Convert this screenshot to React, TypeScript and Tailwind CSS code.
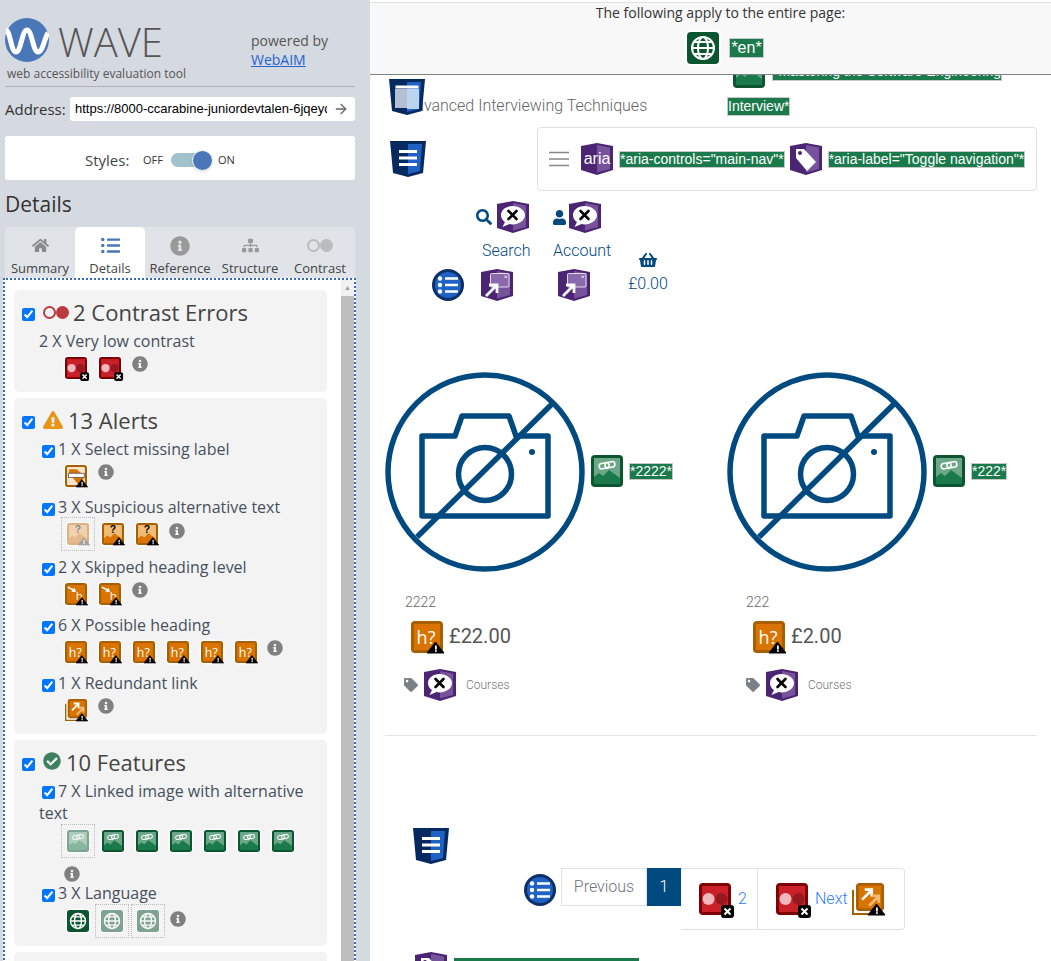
import React from 'react';
import { FaHome, FaListUl, FaInfoCircle, FaSitemap, FaSearch, FaUser, FaShoppingBasket, FaTag, FaCheckCircle, FaExclamationTriangle } from 'react-icons/fa';
import { ArrowRight } from 'lucide-react';

// --- WAVE icons, all drawn on a 32x32 box ---
const Badge: React.FC<{ muted?: boolean }> = ({ muted }) => (
    <g>
        <path d="M24.5 21 L33 32 H16 Z" fill={muted ? '#888' : '#000'} stroke={muted ? '#888' : '#000'} strokeWidth="1" strokeLinejoin="round" />
        <rect x="24" y="24.5" width="1.8" height="4" fill="#fff" />
        <rect x="24" y="29.2" width="1.8" height="1.6" fill="#fff" />
    </g>
);

const Square: React.FC<{ outer: string; inner: string; children?: React.ReactNode }> = ({ outer, inner, children }) => (
    <g>
        <rect x="-2" y="-2" width="36" height="36" rx="6" fill="#fff" />
        <rect x="0" y="0" width="32" height="32" rx="4" fill={outer} />
        <rect x="3" y="3" width="26" height="26" fill={inner} />
        {children}
    </g>
);

const Globe = () => (
    <g fill="none" stroke="#fff" strokeWidth="2">
        <circle cx="16" cy="16" r="11" />
        <ellipse cx="16" cy="16" rx="5" ry="11" />
        <path d="M5 16H27M7 10H25M7 22H25" />
    </g>
);

const Mountain: React.FC<{ fill: string }> = ({ fill }) => <path d="M3 29V22L8 18L12 21L18 15L29 23V29Z" fill={fill} />;

const LinkGlyph = () => (
    <g fill="none" stroke="#fff" strokeWidth="1.5">
        <rect x="8" y="8" width="10" height="5.5" rx="2.7" transform="rotate(-10 13 10)" />
        <rect x="14" y="7" width="10" height="5.5" rx="2.7" transform="rotate(-10 19 10)" />
    </g>
);

const PurpleShield: React.FC<{ children?: React.ReactNode }> = ({ children }) => (
    <g>
        <path d="M0 3L16 0L32 3V27L16 32L0 27Z" fill="#4b2473" />
        <path d="M16 2L29 4.5V26L16 29.5Z" fill="#76539b" />
        {children}
    </g>
);

const Bubble = () => (
    <g>
        <path d="M15.5 5C9 5 4 9 4 14C4 17 5.5 19.5 8 21L5.5 26L12.5 23C13.5 23.2 14.5 23.4 15.5 23.4C22 23.4 28 19.5 28 14C28 9 22 5 15.5 5Z" fill="#fff" />
        <path d="M11.5 10L19.5 18M19.5 10L11.5 18" stroke="#000" strokeWidth="2.6" strokeLinecap="round" />
    </g>
);

const Expand = () => (
    <g>
        <rect x="9.5" y="4.5" width="18.5" height="13.5" rx="1" fill="#8a6aaa" stroke="#fff" strokeWidth="0.8" />
        <path d="M5 27L15 17M8 16H16V24" fill="none" stroke="#fff" strokeWidth="2.8" />
        <path d="M23.5 6.5L26 9M26 6.5L23.5 9" stroke="#fff" strokeWidth="0.8" />
    </g>
);

const orange = '#a95e00';
const orangeIn = '#d97400';
const glyphs: Record<string, React.ReactNode> = {
    contrast: (
        <g>
            <Square outer="#7f0000" inner="#c9202a">
                <circle cx="9.5" cy="16" r="6" fill="#f0b8bc" />
                <circle cx="22.5" cy="16" r="6" fill="#961820" />
            </Square>
            <rect x="22" y="22" width="13" height="13" rx="3" fill="#000" />
            <path d="M25.5 25.5L31.5 31.5M31.5 25.5L25.5 31.5" stroke="#fff" strokeWidth="2" />
        </g>
    ),
    select: (
        <g>
            <rect x="-2" y="-2" width="36" height="36" rx="6" fill="#fff" />
            <rect x="1.5" y="1.5" width="29" height="29" rx="3" fill="#f8e6cc" stroke={orange} strokeWidth="3" />
            <path d="M6 6H17L29 17L19 28L6 12Z" fill={orangeIn} />
            <rect x="5" y="12" width="23" height="6" fill="#fff" stroke="#555" strokeWidth="1.2" />
            <Badge />
        </g>
    ),
    alt: (
        <g>
            <Square outer={orange} inner="#f0bc78">
                <Mountain fill={orangeIn} />
                <text x="16" y="15" fontSize="15" fontWeight="700" fontFamily="Liberation Sans, sans-serif" textAnchor="middle" fill="#000">?</text>
            </Square>
            <Badge />
        </g>
    ),
    altMuted: (
        <g opacity="0.75">
            <Square outer="#d99c5c" inner="#f0c898">
                <Mountain fill="#e0a868" />
                <text x="16" y="15" fontSize="15" fontWeight="700" fontFamily="Liberation Sans, sans-serif" textAnchor="middle" fill="#666">?</text>
            </Square>
            <Badge muted />
        </g>
    ),
    skipped: (
        <g>
            <Square outer={orange} inner={orangeIn}>
                <path d="M4 6L14 11" stroke="#fff" strokeWidth="2.4" />
                <path d="M16 13L9 13L14 7Z" fill="#fff" />
                <text x="21" y="24" fontSize="17" fontFamily="Open Sans, sans-serif" textAnchor="middle" fill="#fff">h</text>
            </Square>
            <Badge />
        </g>
    ),
    possible: (
        <g>
            <Square outer={orange} inner={orangeIn}>
                <text x="15" y="23" fontSize="18" fontFamily="Open Sans, sans-serif" textAnchor="middle" fill="#fff">h?</text>
            </Square>
            <Badge />
        </g>
    ),
    redundant: (
        <g>
            <path d="M1 7V31H27" fill="none" stroke="#fff" strokeWidth="4" />
            <path d="M1 7V31H27" fill="none" stroke={orange} strokeWidth="2" />
            <g transform="translate(4 0) scale(0.875)">
                <rect x="0" y="0" width="32" height="32" rx="4" fill={orange} />
                <rect x="3" y="3" width="26" height="26" fill={orangeIn} />
                <path d="M7 19L17 9M10 7.5H18V15.5" fill="none" stroke="#fff" strokeWidth="3" />
                <path d="M15 26L25 16M18 14.5H26V22.5" fill="none" stroke="#f0bc78" strokeWidth="3" />
            </g>
            <Badge />
        </g>
    ),
    linked: (
        <Square outer="#0b5530" inner="#6ca888">
            <Mountain fill="#1b7a4c" />
            <LinkGlyph />
        </Square>
    ),
    linkedMuted: (
        <g opacity="0.5">
            <Square outer="#0b5530" inner="#6ca888">
                <Mountain fill="#1b7a4c" />
                <LinkGlyph />
            </Square>
        </g>
    ),
    lang: (
        <Square outer="#0b5530" inner="#0b5530">
            <Globe />
        </Square>
    ),
    langMuted: (
        <g opacity="0.5">
            <Square outer="#0b5530" inner="#0b5530">
                <Globe />
            </Square>
        </g>
    ),
    list: (
        <g>
            <circle cx="16" cy="16" r="16" fill="#0b2f66" />
            <circle cx="16" cy="16" r="13" fill="#1f62c4" />
            <path d="M13 9.5H26M13 16H26M13 22.5H26" stroke="#fff" strokeWidth="2.4" />
            <circle cx="8" cy="9.5" r="2.2" fill="#fff" />
            <circle cx="8" cy="16" r="2.2" fill="#fff" />
            <circle cx="8" cy="22.5" r="2.2" fill="#fff" />
        </g>
    ),
    noalt: (
        <PurpleShield>
            <Bubble />
        </PurpleShield>
    ),
    expand: (
        <PurpleShield>
            <Expand />
        </PurpleShield>
    ),
    aria: (
        <PurpleShield>
            <text x="16" y="21" fontSize="16" fontFamily="Liberation Sans, sans-serif" textAnchor="middle" fill="#fff">aria</text>
        </PurpleShield>
    ),
    tag: (
        <PurpleShield>
            <path d="M6 6H14L26 19L17 28L6 15Z" fill="#fff" />
            <circle cx="10" cy="10" r="2" fill="#4b2473" />
        </PurpleShield>
    ),
};

const Ico: React.FC<{ kind: string; size?: number; className?: string }> = ({ kind, size = 32, className }) => (
    <svg width={size} height={size} viewBox="0 0 32 32" className={`shrink-0 overflow-visible font-normal ${className || ''}`}>
        {glyphs[kind]}
    </svg>
);

// the CSS/HTML shield icons on the page
const Shield: React.FC<{ dim?: boolean; className?: string }> = ({ dim, className }) => (
    <svg width="36" height="36" viewBox="0 0 36 36" className={`shrink-0 ${className || ''}`}>
        <path d="M0 0H36L33 32L18 36L3 32Z" fill="#062a5f" />
        <path d="M18 3H32L30 30L18 33Z" fill="#1f62c4" />
        {dim ? (
            <g>
                <rect x="6" y="10" width="12" height="19" fill="#b3c0d4" />
                <rect x="18" y="10" width="12" height="20" fill="#bcd4f0" />
                <rect x="6.5" y="6.5" width="23" height="3" fill="#fff" />
            </g>
        ) : (
            <path d="M9 10.5H27M9 17H27M9 23.5H27" stroke="#fff" strokeWidth="3" />
        )}
    </svg>
);

const Label: React.FC<{ children: React.ReactNode; className?: string }> = ({ children, className }) => (
    <span className={`bg-[#1a7a4c] border border-[#c8c8c8] text-white leading-[15px] whitespace-nowrap font-normal font-['Liberation_Sans',sans-serif] ${className || 'text-[14px]'}`}>{children}</span>
);

const NoCamera = () => (
    <svg width="200" height="200" viewBox="0 0 200 200" className="shrink-0" fill="none" stroke="#004a80" strokeWidth="5.5">
        <circle cx="100" cy="100" r="97" />
        <path d="M37 64H70L77 44H124L131 64H163V144H37Z" strokeLinejoin="round" />
        <circle cx="100" cy="102" r="26.5" />
        <circle cx="147" cy="80" r="3" fill="#004a80" stroke="none" />
        <path d="M168 31L32 165" />
    </svg>
);

// --- Sidebar bits ---
const Check: React.FC<{ className?: string }> = ({ className }) => (
    <input type="checkbox" defaultChecked readOnly className={`w-[13px] h-[13px] m-0 shrink-0 ${className || ''}`} />
);

const Info: React.FC<{ className?: string }> = ({ className }) => <FaInfoCircle className={`text-[#808080] text-[16px] shrink-0 ${className || ''}`} />;

const Ghost: React.FC<{ kind: string }> = ({ kind }) => (
    <span className="w-[34px] h-[34px] border border-dotted border-[#bbb] flex items-center justify-center shrink-0">
        <Ico kind={kind} size={22} />
    </span>
);

const Item: React.FC<{ text: string; className?: string; children: React.ReactNode }> = ({ text, className, children }) => (
    <div className={className}>
        <div className="pl-[28px] -mb-px leading-[22px]">
            <span className="inline-flex items-baseline">
                <Check className="translate-y-[3px]" />
                <span className="ml-[3px]">{text}</span>
            </span>
        </div>
        {children}
    </div>
);

const Heading: React.FC<{ icon: React.ReactNode; text: string }> = ({ icon, text }) => (
    <div className="flex items-center pl-[8px] h-[24px]">
        <Check className="translate-y-[2px]" />
        {icon}
        <span className="text-[22px] text-[#444] leading-[24px]">{text}</span>
    </div>
);

const Sidebar = () => (
    <aside className="w-[370px] h-[961px] shrink-0 overflow-hidden bg-[#d5d9e0] pt-[2px] pl-[5px] pr-[15px] font-['Open_Sans',sans-serif] text-[#3f4650]">
        <div className="h-[85px] border-b border-[#aeb2b6] relative flex">
            <div className="w-[246px]">
                <div className="flex items-center pt-[16px] h-[60px]">
                    <svg width="44" height="44" viewBox="0 0 44 44" className="shrink-0">
                        <circle cx="22" cy="22" r="22" fill="#4a77b8" />
                        <path d="M1 12C5 12 6 34 11 34C16 34 17 12 22 12C27 12 28 34 33 34C38 34 40 18 43 15" fill="none" stroke="#fff" strokeWidth="5" />
                    </svg>
                    <span className="ml-[9px] mt-[3px] text-[40px] leading-[40px] font-light text-[#555]">WAVE</span>
                </div>
                <div className="pl-[2px] text-[12px] leading-[16px] mt-[4px] text-[#555]">web accessibility evaluation tool</div>
            </div>
            <div className="pt-[29px] text-[14px] leading-[19px] text-[#555]">
                <div>powered by</div>
                <div className="text-[#2563d0] underline">WebAIM</div>
            </div>
        </div>
        <div className="flex items-center mt-[10px] h-[24px]">
            <span className="text-[15px] w-[65px] text-[#333]">Address:</span>
            <div className="w-[285px] h-[24px] bg-white rounded-[3px] flex items-center pl-[5px] font-['Liberation_Sans',sans-serif] text-[13px] text-black">
                <span className="w-[252px] shrink-0 overflow-hidden whitespace-nowrap">https://8000-ccarabine-juniordevtalen-6jqeyq</span>
                <ArrowRight className="w-[16px] h-[16px] text-[#666] ml-[6px] shrink-0" />
            </div>
        </div>
        <div className="mt-[15px] h-[44px] bg-white rounded-[3px] flex items-center pl-[80px] pt-[4px]">
            <span className="text-[15px] w-[58px] text-[#444]">Styles:</span>
            <span className="text-[11px] w-[28px] text-[#333]">OFF</span>
            <span className="relative w-[40px] h-[14px] rounded-full bg-[#a0c2cc]">
                <span className="absolute right-[-2px] top-[-3px] w-[21px] h-[21px] rounded-full bg-[#4a77b8] border border-white shadow-sm"></span>
            </span>
            <span className="text-[11px] ml-[7px] text-[#333]">ON</span>
        </div>
        <h2 className="text-[21px] leading-[28px] mt-[10px] text-[#333]">Details</h2>
        <div className="mt-[9px] h-[51px] bg-[#e0e3e8] rounded-t-[5px] flex text-[13px] text-[#444]">
            {[
                { name: 'Summary', icon: <FaHome className="text-[#8a8a8a] text-[17px]" /> },
                { name: 'Details', icon: <FaListUl className="text-[#4a77b8] text-[19px]" />, on: true },
                { name: 'Reference', icon: <FaInfoCircle className="text-[#999] text-[20px]" /> },
                { name: 'Structure', icon: <FaSitemap className="text-[#999] text-[17px]" /> },
                {
                    name: 'Contrast',
                    icon: (
                        <span className="flex items-center">
                            <span className="w-[13px] h-[13px] rounded-full border-2 border-[#bbb]"></span>
                            <span className="w-[13px] h-[13px] rounded-full bg-[#bbb]"></span>
                        </span>
                    ),
                },
            ].map((t) => (
                <div key={t.name} className={`w-[70px] flex flex-col items-center pt-[8px] rounded-t-[5px] ${t.on ? 'bg-white' : ''}`}>
                    <div className="h-[21px] flex items-center">{t.icon}</div>
                    <div className="leading-[17px] mt-[4px] whitespace-nowrap">{t.name}</div>
                </div>
            ))}
        </div>
        <div className="h-[690px] w-[353px] -ml-[2px] bg-white border-2 border-dotted border-[#3a6db0] flex">
            <div className="w-[336px] pl-[9px] pt-[10px] text-[16px] leading-[22px] text-[#46505c]">
                <section className="w-[313px] h-[102px] bg-[#f3f3f3] rounded-[5px] pt-[10px]">
                    <Heading
                        icon={
                            <span className="flex items-center ml-[8px] mr-[4px]">
                                <span className="w-[13px] h-[13px] rounded-full border-2 border-[#bb3a3f]"></span>
                                <span className="w-[13px] h-[13px] rounded-full bg-[#bb3a3f]"></span>
                            </span>
                        }
                        text="2 Contrast Errors"
                    />
                    <div className="pl-[25px] mt-[6px]">2 X Very low contrast</div>
                    <div className="flex pl-[51px] mt-[5px]">
                        <Ico kind="contrast" size={22} />
                        <Ico kind="contrast" size={22} className="ml-[12px]" />
                        <Info className="ml-[11px] -mt-[1px]" />
                    </div>
                </section>
                <section className="w-[313px] h-[336px] mt-[6px] bg-[#f3f3f3] rounded-[5px] pt-[10px]">
                    <Heading icon={<FaExclamationTriangle className="text-[#e89419] text-[20px] ml-[8px] mr-[5px]" />} text="13 Alerts" />
                    <Item text="1 X Select missing label" className="mt-[6px]">
                        <div className="flex pl-[51px] mt-[6px]">
                            <Ico kind="select" size={22} />
                            <Info className="ml-[11px] -mt-[1px]" />
                        </div>
                    </Item>
                    <Item text="3 X Suspicious alternative text" className="mt-[9px]">
                        <div className="flex items-center pl-[47px]">
                            <Ghost kind="altMuted" />
                            <Ico kind="alt" size={22} className="ml-[7px]" />
                            <Ico kind="alt" size={22} className="ml-[12px]" />
                            <Info className="ml-[11px] -mt-[6px]" />
                        </div>
                    </Item>
                    <Item text="2 X Skipped heading level" className="mt-[5px]">
                        <div className="flex pl-[51px] mt-[6px]">
                            <Ico kind="skipped" size={22} />
                            <Ico kind="skipped" size={22} className="ml-[12px]" />
                            <Info className="ml-[11px] -mt-[1px]" />
                        </div>
                    </Item>
                    <Item text="6 X Possible heading" className="mt-[9px]">
                        <div className="flex pl-[51px] mt-[6px]">
                            {[0, 1, 2, 3, 4].map((i) => (
                                <Ico key={i} kind="possible" size={22} className="mr-[12px]" />
                            ))}
                            <Ico kind="possible" size={22} />
                            <Info className="ml-[10px] -mt-[1px]" />
                        </div>
                    </Item>
                    <Item text="1 X Redundant link" className="mt-[9px]">
                        <div className="flex pl-[51px] mt-[6px]">
                            <Ico kind="redundant" size={22} />
                            <Info className="ml-[11px] -mt-[1px]" />
                        </div>
                    </Item>
                </section>
                <section className="w-[313px] h-[206px] mt-[6px] bg-[#f3f3f3] rounded-[5px] pt-[10px]">
                    <Heading icon={<FaCheckCircle className="text-[#3e7f5f] text-[18px] ml-[8px] mr-[5px] -mt-[3px]" />} text="10 Features" />
                    <div className="mt-[6px] pl-[25px] leading-[22px]">
                        <Check className="ml-[3px] translate-y-[2px]" />
                        <span className="pl-[3px]">7 X Linked image with alternative text</span>
                    </div>
                    <div className="flex items-center pl-[47px]">
                        <Ghost kind="linkedMuted" />
                        {[0, 1, 2, 3, 4, 5].map((i) => (
                            <Ico key={i} kind="linked" size={22} className={i === 0 ? 'ml-[7px]' : 'ml-[12px]'} />
                        ))}
                    </div>
                    <Info className="ml-[50px] mt-[8px]" />
                    <Item text="3 X Language" className="mt-[0px]">
                        <div className="flex items-center pl-[47px] mt-[1px]">
                            <span className="w-[34px] flex justify-center"><Ico kind="lang" size={22} /></span>
                            <Ghost kind="langMuted" />
                            <span className="ml-[2px]"><Ghost kind="langMuted" /></span>
                            <Info className="ml-[5px] -mt-[5px]" />
                        </div>
                    </Item>
                </section>
                <section className="w-[313px] h-[60px] mt-[6px] bg-[#f3f3f3] rounded-[5px]"></section>
            </div>
            <div className="w-[13px] bg-[#f1f1f1] flex flex-col items-center">
                <span className="h-[16px] flex items-center text-[#999] text-[7px]">▲</span>
                <span className="w-full flex-1 bg-[#bebebe]"></span>
            </div>
        </div>
    </aside>
);

// --- Page ---
const Product: React.FC<{ name: string; price: string; width: string; pad: string; shift: string }> = ({ name, price, width, pad, shift }) => (
    <div className={`${width} shrink-0`}>
        <div className="flex items-center">
            <NoCamera />
            <Ico kind="linked" className="ml-[6px] -mt-[2px]" />
            <Label className="ml-[6px] -mt-[2px] text-[14px]">*{name}*</Label>
        </div>
        <div className={`${pad} mt-[20px] text-[14px] leading-[20px] text-[#666] font-light`}>{name}</div>
        <div className={`${shift} flex items-center mt-[9px]`}>
            <Ico kind="possible" />
            <span className="ml-[6px] -mt-[3px] text-[20px] font-normal text-[#555]">{price}</span>
        </div>
        <div className={`${shift} -ml-[7px] flex items-center mt-[16px]`}>
            <FaTag className="text-[#7a8088] text-[14px]" />
            <Ico kind="noalt" className="ml-[6px]" />
            <span className="ml-[10px] text-[12px] font-light text-[#777]">Courses</span>
        </div>
    </div>
);

const Page = () => (
    <main className="flex-1 min-w-0 h-[961px] overflow-hidden bg-white font-['Roboto',sans-serif] font-light text-[#555]">
        <header className="relative z-10 h-[73px] mt-[2px] pl-[20px] bg-[#f8f8f8] border-b border-t border-[#7c8580] border-t-[#e0e0e0] flex flex-col items-center font-['Open_Sans',sans-serif] font-normal text-[14px] text-[#333]">
            <div className="leading-[20px]">The following apply to the entire page:</div>
            <div className="flex items-center mt-[9px] ml-[10px]">
                <Ico kind="lang" />
                <Label className="ml-[10px] px-px text-[16px] leading-[18px]">*en*</Label>
            </div>
        </header>
        <div className="flex -mt-[18px]">
            <div className="w-[357px] pl-[19px] pt-[17px] flex items-center h-[62px]">
                <Shield dim className="relative z-[1]" />
                <span className="-ml-[20px] text-[16px] whitespace-nowrap text-[#666] mt-[19px]">Advanced Interviewing Techniques</span>
            </div>
            <div>
                <div className="flex items-center pl-[6px] h-[30px]">
                    <Ico kind="linked" />
                    <Label className="ml-[7px] self-end mb-[6px] h-[18px] text-[14px]">*Mastering the Software Engineering</Label>
                </div>
                <Label className="inline-block mt-[10px] leading-[17px] text-[14px]">Interview*</Label>
            </div>
        </div>
        <div className="flex mt-[8px] pl-[20px]">
            <Shield className="mt-[14px]" />
            <div className="ml-[111px] w-[500px] h-[64px] border border-[#e0e0e0] rounded-[4px] flex items-center pl-[11px]">
                <svg width="21" height="16" viewBox="0 0 21 16" className="shrink-0">
                    <path d="M0 1.5H20M0 8H20M0 14.5H20" stroke="#888" strokeWidth="1.6" />
                </svg>
                <Ico kind="aria" className="ml-[11px]" />
                <Label className="ml-[6px] text-[14px]">*aria-controls="main-nav"*</Label>
                <Ico kind="tag" className="ml-[5px]" />
                <Label className="ml-[6px] text-[14px]">*aria-label="Toggle navigation"*</Label>
            </div>
        </div>
        <div className="flex ml-[62px] mt-[10px] h-[100px]">
            <div className="mt-[68px]">
                <Ico kind="list" />
            </div>
            <div className="w-[94px] ml-[17px] flex flex-col">
                <div className="flex items-center -ml-[5px]">
                    <FaSearch className="text-[#004a80] text-[16px]" />
                    <Ico kind="noalt" className="ml-[5px]" />
                </div>
                <div className="text-[16px] leading-[20px] mt-[8px] ml-[1px] text-[#004a80]">Search</div>
                <Ico kind="expand" className="mt-[8px]" />
            </div>
            <div className="w-[70px] -ml-[23px] flex flex-col">
                <div className="flex items-center">
                    <FaUser className="text-[#004a80] text-[15px]" />
                    <Ico kind="noalt" className="ml-[2px]" />
                </div>
                <div className="text-[16px] leading-[20px] mt-[8px] ml-[1px] text-[#004a80]">Account</div>
                <Ico kind="expand" className="mt-[8px] ml-[6px]" />
            </div>
            <div className="ml-[6px] mt-[50px] flex flex-col items-center w-[40px]">
                <FaShoppingBasket className="text-[#004a80] text-[18px]" />
                <span className="text-[16px] leading-[20px] mt-[5px] text-[#004a80]">£0.00</span>
            </div>
        </div>
        <div className="flex pl-[15px] mt-[71px]">
            <Product name="2222" price="£22.00" width="w-[342px]" pad="pl-[20px]" shift="pl-[26px]" />
            <Product name="222" price="£2.00" width="w-[300px]" pad="pl-[19px]" shift="pl-[26px]" />
        </div>
        <hr className="ml-[15px] w-[652px] mt-[34px] border-t border-[#e5e5e5]" />
        <Shield className="ml-[43px] mt-[92px]" />
        <div className="flex items-start ml-[154px] mt-[4px]">
            <Ico kind="list" className="mt-[6px]" />
            <div className="ml-[5px] w-[86px] h-[38px] border border-[#dee2e6] flex items-center justify-center text-[16px] text-[#6c757d]">Previous</div>
            <div className="w-[34px] h-[38px] bg-[#004a80] text-white text-[16px] flex items-center justify-center">1</div>
            <div className="w-[77px] h-[62px] border border-l-0 border-[#dee2e6] flex items-center pl-[18px] text-[16px] text-[#2d7ff9]">
                <Ico kind="contrast" />
                <span className="ml-[7px]">2</span>
            </div>
            <div className="w-[147px] h-[62px] border border-l-0 border-[#dee2e6] rounded-r-[4px] flex items-center pl-[18px] text-[16px] text-[#2d7ff9]">
                <Ico kind="contrast" />
                <span className="ml-[7px]">Next</span>
                <Ico kind="redundant" className="ml-[4px]" />
            </div>
        </div>
        <div className="flex ml-[45px] mt-[22px]">
            <Ico kind="tag" />
            <span className="ml-[7px] mt-[6px] w-[185px] h-[20px] bg-[#1a7a4c]"></span>
        </div>
    </main>
);

export default function App() {
    return (
        <div className="flex w-[1051px] h-[961px] overflow-hidden bg-white">
            <Sidebar />
            <Page />
        </div>
    );
}
